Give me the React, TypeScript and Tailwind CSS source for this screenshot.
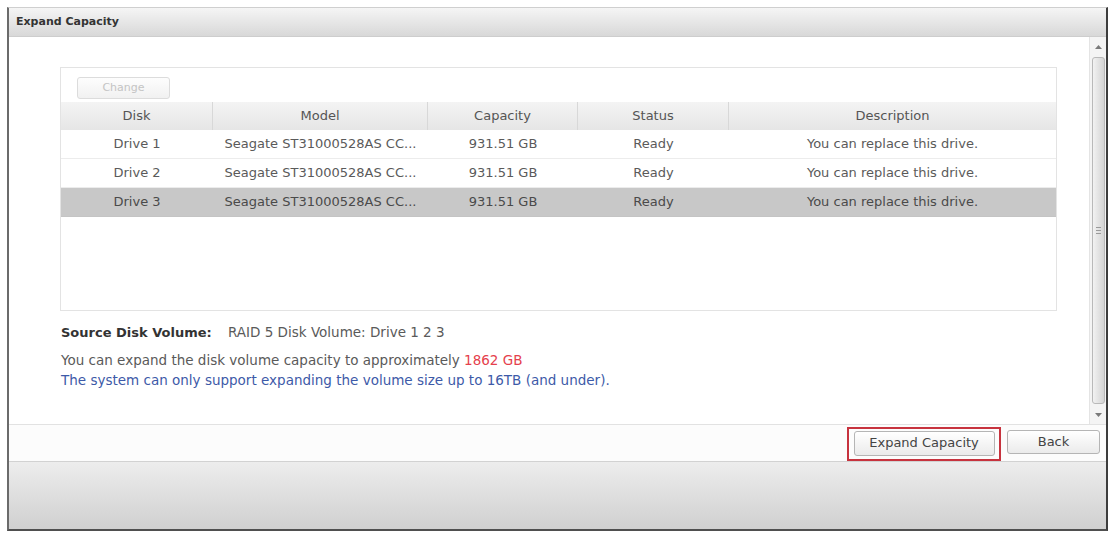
const drives = [
  { disk: "Drive 1", model: "Seagate ST31000528AS CC...", capacity: "931.51 GB", status: "Ready", description: "You can replace this drive.", selected: false },
  { disk: "Drive 2", model: "Seagate ST31000528AS CC...", capacity: "931.51 GB", status: "Ready", description: "You can replace this drive.", selected: false },
  { disk: "Drive 3", model: "Seagate ST31000528AS CC...", capacity: "931.51 GB", status: "Ready", description: "You can replace this drive.", selected: true },
];

const columns = ["Disk", "Model", "Capacity", "Status", "Description"];

function ScrollArrow({ up }: { up: boolean }) {
  return (
    <div className="flex h-[19px] w-full items-center justify-center">
      <svg width="7" height="4" viewBox="0 0 7 4">
        <path d={up ? "M0 4 L3.5 0 L7 4 Z" : "M0 0 L3.5 4 L7 0 Z"} fill="#7a7a7a" />
      </svg>
    </div>
  );
}

export default function App() {
  return (
    <div className="h-[534px] w-[1115px] overflow-hidden bg-white pl-[7px] pt-[7px] font-['DejaVu_Sans',sans-serif]">
      <div className="flex h-[524px] w-[1101px] flex-col border-t border-b-2 border-l-2 border-r-2 border-t-[#cfcfcf] border-b-[#4f4f4f] border-l-[#6b6b6b] border-r-[#3d3d3d]">
        {/* title bar */}
        <div className="flex h-[29px] shrink-0 items-center border-b border-[#cdcdcd] bg-linear-to-b from-[#f5f5f5] to-[#d8d8d8] px-[7px] text-[11px] font-bold text-[#333]">
          Expand Capacity
        </div>

        {/* body */}
        <div className="flex h-[387px] shrink-0">
          <div className="flex-1 pl-[51px] pr-[32px] pt-[30px]">
            <div className="h-[244px] border border-[#e3e3e3] bg-white">
              <div className="h-[34px] pl-[16px] pt-[6px]">
                <button className="h-[22px] w-[93px] rounded-[3px] border border-[#dcdcdc] bg-linear-to-b from-[#fdfdfd] to-[#f1f1f1] text-[11px] text-[#c4c4c4]">
                  Change
                </button>
              </div>
              <div className="grid h-[28px] grid-cols-[152px_215px_150px_151px_1fr] bg-linear-to-b from-[#f4f4f4] to-[#e6e6e6] text-[13px] text-[#555]">
                {columns.map((c, i) => (
                  <div
                    key={c}
                    className={`flex items-center justify-center ${i < columns.length - 1 ? "border-r border-[#d8d8d8]" : ""}`}
                  >
                    {c}
                  </div>
                ))}
              </div>
              {drives.map((d) => (
                <div
                  key={d.disk}
                  className={`grid h-[29px] grid-cols-[152px_215px_150px_151px_1fr] items-center border-b text-[13px] ${
                    d.selected ? "border-[#c4c4c4] bg-[#c8c8c8] text-[#4a4a4a]" : "border-[#ececec] bg-white text-[#5a5a5a]"
                  }`}
                >
                  <div className="text-center">{d.disk}</div>
                  <div className="text-center whitespace-nowrap">{d.model}</div>
                  <div className="text-center">{d.capacity}</div>
                  <div className="text-center">{d.status}</div>
                  <div className="text-center">{d.description}</div>
                </div>
              ))}
            </div>

            <div className="pl-[1px] text-[13.5px] leading-[16px]">
              <div className="mt-[13px]">
                <span className="inline-block w-[167px] text-[13px] font-bold text-[#333]">Source Disk Volume:</span>
                <span className="text-[#5a5a5a]">RAID 5 Disk Volume: Drive 1 2 3</span>
              </div>
              <div className="mt-[11px] text-[#5a5a5a]">
                You can expand the disk volume capacity to approximately{" "}
                <span className="text-[#e5404c]">1862 GB</span>
              </div>
              <div className="mt-[4px] text-[#3d5aa8]">
                The system can only support expanding the volume size up to 16TB (and under).
              </div>
            </div>
          </div>

          {/* scrollbar */}
          <div className="flex w-[17px] flex-col items-center border-l border-[#e4e4e4] bg-[#f4f4f4]">
            <ScrollArrow up />
            <div className="my-[1px] flex w-[13px] flex-1 flex-col items-center justify-center gap-[2px] rounded-[3px] border border-[#b9b9b9] bg-linear-to-r from-[#f2f2f2] to-[#d4d4d4]">
              <div className="h-px w-[5px] bg-[#9a9a9a]" />
              <div className="h-px w-[5px] bg-[#9a9a9a]" />
              <div className="h-px w-[5px] bg-[#9a9a9a]" />
            </div>
            <ScrollArrow up={false} />
          </div>
        </div>

        {/* button bar */}
        <div className="flex h-[37px] shrink-0 items-end justify-end gap-[6px] border-t border-[#e2e2e2] bg-[#fcfcfc] pr-[6px]">
          <div className="flex h-[34px] w-[154px] items-center justify-center border-2 border-[#c7333e] pb-[2px]">
            <button className="h-[25px] w-[141px] rounded-[3px] border border-[#b5b5b5] bg-linear-to-b from-[#ffffff] to-[#ebebeb] text-[13px] text-[#444]">
              Expand Capacity
            </button>
          </div>
          <div className="flex h-[34px] items-center pb-[4px]">
            <button className="h-[24px] w-[93px] rounded-[3px] border border-[#b5b5b5] bg-linear-to-b from-[#ffffff] to-[#ebebeb] text-[13px] text-[#444]">
              Back
            </button>
          </div>
        </div>

        {/* footer */}
        <div className="flex-1 border-t border-[#d2d2d2] bg-linear-to-b from-[#ededed] to-[#d0d0d0]" />
      </div>
    </div>
  );
}
